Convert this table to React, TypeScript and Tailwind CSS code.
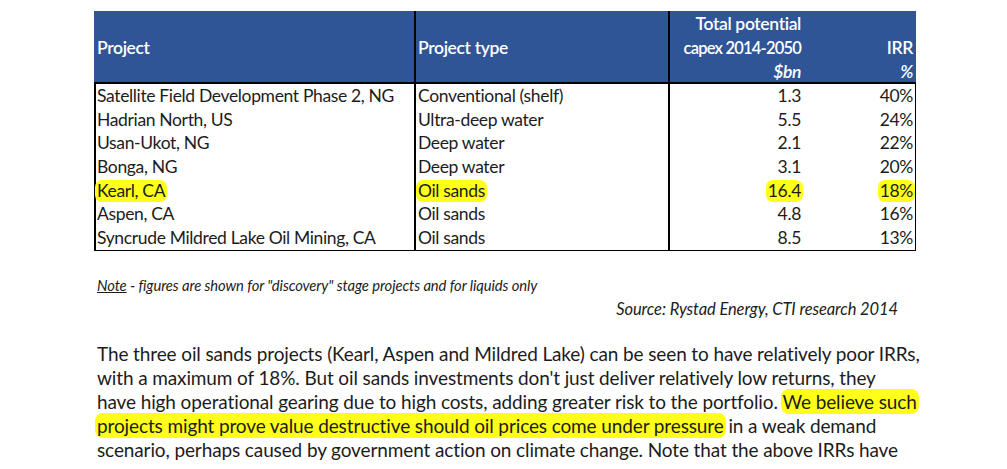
import React from 'react';

interface Row {
  project: string;
  type: string;
  capex: string;
  irr: string;
  highlight?: boolean;
}

const rows: Row[] = [
  { project: 'Satellite Field Development Phase 2, NG', type: 'Conventional (shelf)', capex: '1.3', irr: '40%' },
  { project: 'Hadrian North, US', type: 'Ultra-deep water', capex: '5.5', irr: '24%' },
  { project: 'Usan-Ukot, NG', type: 'Deep water', capex: '2.1', irr: '22%' },
  { project: 'Bonga, NG', type: 'Deep water', capex: '3.1', irr: '20%' },
  { project: 'Kearl, CA', type: 'Oil sands', capex: '16.4', irr: '18%', highlight: true },
  { project: 'Aspen, CA', type: 'Oil sands', capex: '4.8', irr: '16%' },
  { project: 'Syncrude Mildred Lake Oil Mining, CA', type: 'Oil sands', capex: '8.5', irr: '13%' },
];

const Mark: React.FC<{ on?: boolean; children: React.ReactNode }> = ({ on, children }) =>
  on ? (
    <span className="inline-block bg-[#ffff1a] rounded-[7px] px-[2px] -mx-[2px] leading-[22px]">{children}</span>
  ) : (
    <>{children}</>
  );

const App: React.FC = () => {
  return (
    <div className="w-[1007px] h-[469px] overflow-hidden bg-white text-[#1c1c1c] font-['Lato',sans-serif]">
      <div className="pl-[94px] pt-[11px]">
        <div className="w-[822px] text-[17.5px] tracking-[-0.35px]">
          {/* header */}
          <div className="grid grid-cols-[322px_254px_135px_111px] bg-[#2f5597] border-b-2 border-black text-white font-semibold leading-[24px] whitespace-nowrap">
            <div className="border-r-2 border-black h-[71px] pl-[3px] pt-[25px]">Project</div>
            <div className="border-r-2 border-black h-[71px] pl-[2px] pt-[25px]">Project type</div>
            <div className="h-[71px] pr-[4px] pt-[1px] text-right">
              <div>Total potential</div>
              <div className="text-[16.5px] tracking-[-0.8px]">capex 2014-2050</div>
              <div className="italic">$bn</div>
            </div>
            <div className="h-[71px] pr-[3px] pt-[25px] text-right">
              <div>IRR</div>
              <div className="italic">%</div>
            </div>
          </div>

          {/* body */}
          <div className="border-l-2 border-r border-b border-black">
            {rows.map((r) => (
              <div key={r.project} className="grid grid-cols-[320px_254px_135px_110px] h-[23.7px] leading-[23.7px]">
                <div className="border-r-2 border-black pl-[1px] whitespace-nowrap">
                  <Mark on={r.highlight}>{r.project}</Mark>
                </div>
                <div className="border-r-2 border-black pl-[2px] whitespace-nowrap">
                  <Mark on={r.highlight}>{r.type}</Mark>
                </div>
                <div className="text-right pr-[4px]">
                  <Mark on={r.highlight}>{r.capex}</Mark>
                </div>
                <div className="text-right pr-[2px]">
                  <Mark on={r.highlight}>{r.irr}</Mark>
                </div>
              </div>
            ))}
          </div>
        </div>

        <div className="pl-[3px] pt-[26px] text-[14.8px] italic leading-[17px] tracking-[-0.1px]">
          <span className="underline">Note</span> - figures are shown for "discovery" stage projects and for liquids only
        </div>
        <div className="w-[804px] pt-[5px] text-right text-[16.5px] italic leading-[20px] tracking-[-0.1px]">
          Source: Rystad Energy, CTI research 2014
        </div>

        <p className="pl-[3px] pt-[23px] text-[19px] leading-[24px] tracking-[-0.12px] whitespace-nowrap">
          The three oil sands projects (Kearl, Aspen and Mildred Lake) can be seen to have relatively poor IRRs,
          <br />
          with a maximum of 18%. But oil sands investments don't just deliver relatively low returns, they
          <br />
          have high operational gearing due to high costs, adding greater risk to the portfolio.{' '}
          <span className="bg-[#ffff1a] rounded-[8px] px-[2px] -mx-[2px] py-[1px]">We believe such</span>
          <br />
          <span className="bg-[#ffff1a] rounded-[8px] px-[2px] -mx-[2px] py-[1px]">
            projects might prove value destructive should oil prices come under pressure
          </span>{' '}
          in a weak demand
          <br />
          scenario, perhaps caused by government action on climate change. Note that the above IRRs have
        </p>
      </div>
    </div>
  );
};

export default App;
